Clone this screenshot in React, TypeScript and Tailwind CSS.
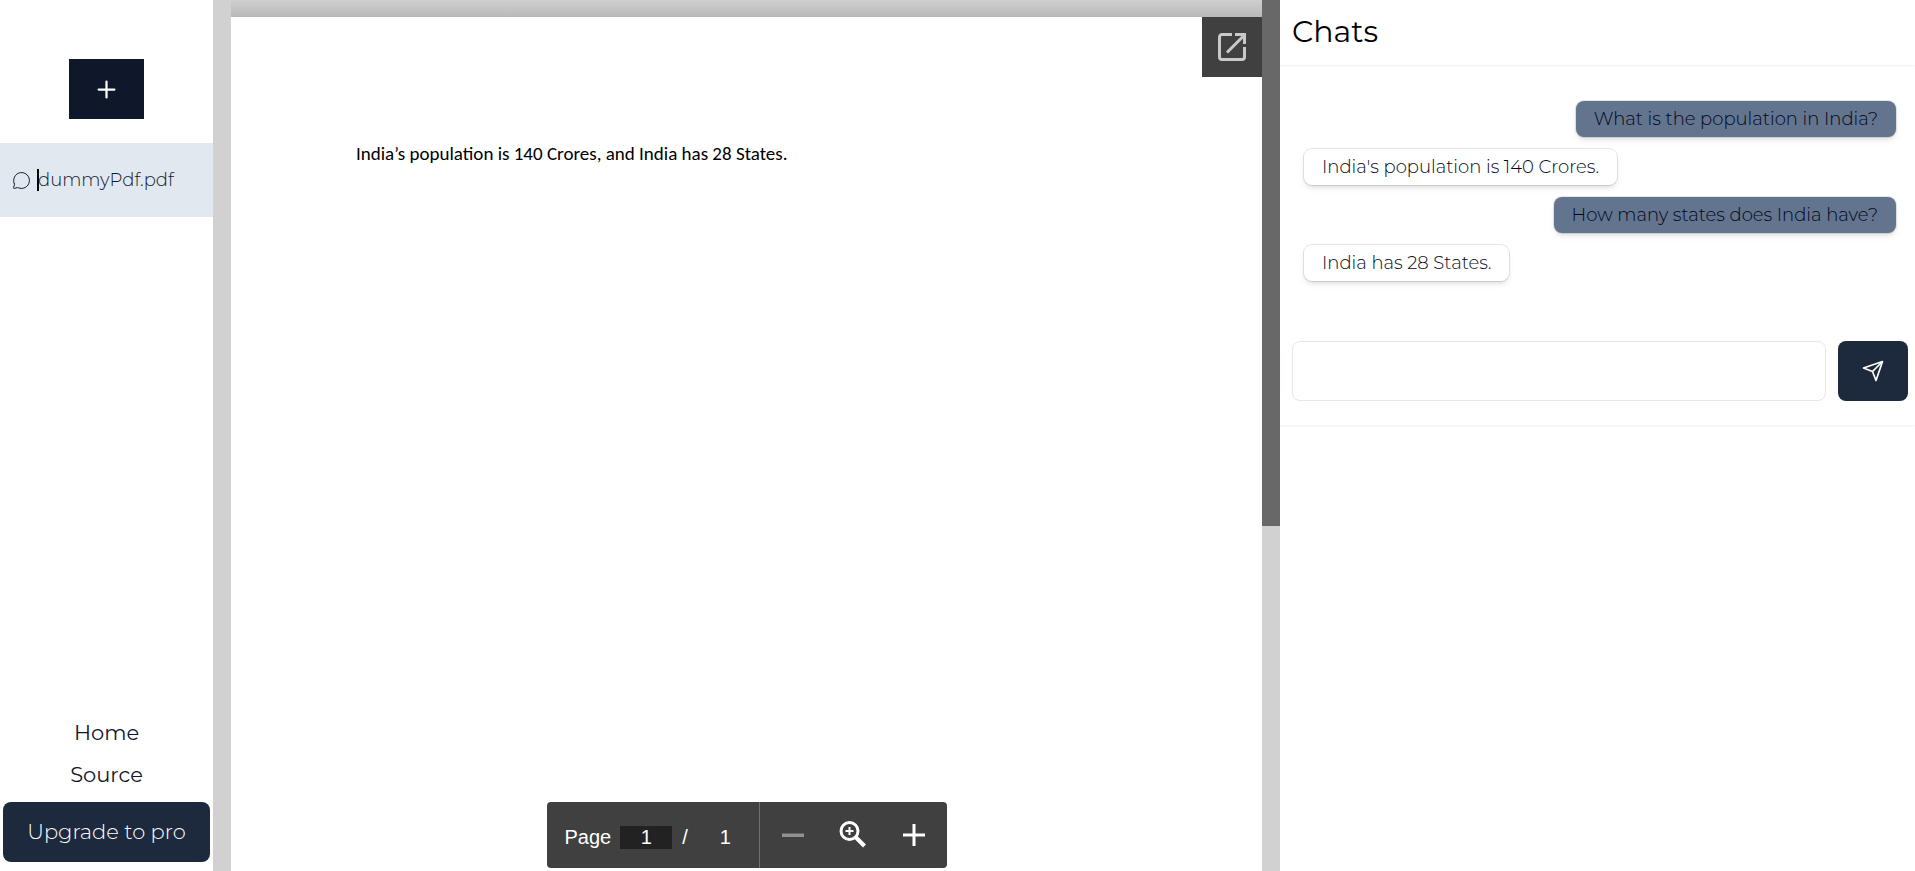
import { MessageCircle, Plus } from 'lucide-react';

type Message = { role: 'user' | 'system'; content: string };

const messages: Message[] = [
  { role: 'user', content: 'What is the population in India?' },
  { role: 'system', content: "India's population is 140 Crores." },
  { role: 'user', content: 'How many states does India have?' },
  { role: 'system', content: 'India has 28 States.' },
];

function Sidebar() {
  return (
    <aside className="flex min-w-0 flex-col bg-white text-slate-900">
      <div className="flex justify-center pt-[59px] pb-6">
        <button type="button" aria-label="New chat" className="flex h-[60px] w-[75px] items-center justify-center bg-slate-900 text-white">
          <Plus size={27} strokeWidth={2} />
        </button>
      </div>
      <a href="#chat" className="flex h-[74px] items-center gap-[6px] bg-slate-200 pl-3 text-[18px] font-light text-slate-900">
        <MessageCircle size={19} strokeWidth={1.25} />
        <span className="flex items-center">
          <span className="-mr-px h-[22px] w-[2px] bg-black" />
          dummyPdf.pdf
        </span>
      </a>
      <nav className="mt-auto flex flex-col items-center px-[3px] pb-[9px] text-[21px]">
        <a href="#home" className="mb-[14px] leading-7">Home</a>
        <a href="#source" className="mb-[13px] leading-7">Source</a>
        <button type="button" className="h-[60px] w-full rounded-lg bg-slate-800 font-light text-white">Upgrade to pro</button>
      </nav>
    </aside>
  );
}

function PageToolbar() {
  return (
    <div className="absolute bottom-[3px] left-1/2 flex h-[66px] w-[400px] -translate-x-1/2 rounded-[4px] bg-[#404040] font-['Liberation_Sans',sans-serif] text-[20px] text-white">
      <div className="flex w-[213px] items-center border-r border-[#707070] pt-1 pl-[18px]">
        <label htmlFor="page">Page</label>
        <input id="page" defaultValue="1" className="ml-[9px] h-[23px] w-[52px] bg-[#222222] text-center" />
        <span className="ml-[10px]">/</span>
        <span className="ml-8">1</span>
      </div>
      <div className="flex flex-1 items-center justify-between px-[18px]">
        <button type="button" aria-label="Zoom out" className="text-[#919191]">
          <svg width="30" height="30" viewBox="0 0 30 30" fill="currentColor"><path d="M4 13.500h22v3.500H4z" /></svg>
        </button>
        <button type="button" aria-label="Fit to width">
          <svg width="30" height="30" viewBox="0 0 30 30" fill="none" stroke="currentColor">
            <circle cx="11.500" cy="11" r="8.500" strokeWidth="3" />
            <path d="M17.500 17l9 9" strokeWidth="4" />
            <path d="M11.500 7v8M7.500 11h8" strokeWidth="2" />
          </svg>
        </button>
        <button type="button" aria-label="Zoom in">
          <svg width="30" height="30" viewBox="0 0 30 30" fill="currentColor"><path d="M4 13.500h9.500V4h3v9.500H26v3h-9.500V26h-3v-9.500H4z" /></svg>
        </button>
      </div>
    </div>
  );
}

function PdfViewer() {
  return (
    <main className="relative flex min-w-0 bg-[#d1d1d1] pl-[18px]">
      <div className="flex min-w-0 flex-1 flex-col">
        <div className="h-[17px] bg-linear-to-b from-[#cfcfcf] to-[#b9b9b9]" />
        <div className="flex flex-1 items-start justify-between bg-white">
          <p className="mt-[123px] ml-[125px] font-['Carlito','Lato',sans-serif] text-[19px] leading-7 text-black">
            India’s population is 140 Crores, and India has 28 States.
          </p>
          <button type="button" aria-label="Open in new window" className="flex size-[60px] items-center justify-center bg-[#404040] text-[#c9c9c9]">
            <svg width="28" height="28" viewBox="0 0 28 28" fill="none" stroke="currentColor" strokeWidth="3">
              <path d="M14 1.500H4A2.500 2.500 0 0 0 1.500 4v20A2.500 2.500 0 0 0 4 26.500h20a2.500 2.500 0 0 0 2.500-2.500V14" />
              <path d="M9 19.500L25 3.500" />
              <path d="M17 1.500h9.500v9.500" />
            </svg>
          </button>
        </div>
      </div>
      <div className="w-[18px]"><div className="h-[526px] bg-[#686868]" /></div>
      <PageToolbar />
    </main>
  );
}

function ChatPanel() {
  return (
    <section className="min-w-0 bg-white">
      <header className="flex h-[65px] items-center px-3 pb-[2px] shadow-[0_1px_2px_rgba(0,0,0,0.07)]">
        <h1 className="text-3xl text-black">Chats</h1>
      </header>
      <div className="h-[360px] shadow-[0_1px_2px_rgba(0,0,0,0.07)]">
        <ul className="flex flex-col gap-3 pt-9 pr-[19px] pl-6">
          {messages.map((m) => (
            <li
              key={m.content}
              className={
                m.role === 'user'
                  ? 'self-end rounded-lg bg-slate-500 px-[18px] py-1 text-[18px] leading-7 font-light text-slate-950 shadow-md ring-1 ring-gray-900/10'
                  : 'self-start rounded-lg bg-white px-[18px] py-1 text-[18px] leading-7 font-light text-slate-950 shadow-md ring-1 ring-gray-900/10'
              }
            >
              {m.content}
            </li>
          ))}
        </ul>
        <form className="mt-[60px] flex gap-3 pr-[7px] pl-3" onSubmit={(e) => e.preventDefault()}>
          <input aria-label="Message" className="h-[60px] min-w-0 flex-1 rounded-lg border border-slate-200 px-4 text-[18px]" />
          <button type="submit" aria-label="Send" className="flex h-[60px] w-[70px] items-center justify-center rounded-lg bg-slate-800 text-white">
            <svg width="22" height="22" viewBox="0 0 22 22" fill="none" stroke="currentColor" strokeWidth="1.700" strokeLinejoin="round">
              <path d="M20.500 1.500L1.500 8l9 3.500L14 20.500z" />
              <path d="M20.500 1.500l-10 10" />
            </svg>
          </button>
        </form>
      </div>
    </section>
  );
}

export default function App() {
  return (
    <div className="grid min-h-screen grid-cols-[213fr_1067fr_635fr] bg-white font-['Montserrat','Inter',sans-serif]">
      <Sidebar />
      <PdfViewer />
      <ChatPanel />
    </div>
  );
}
